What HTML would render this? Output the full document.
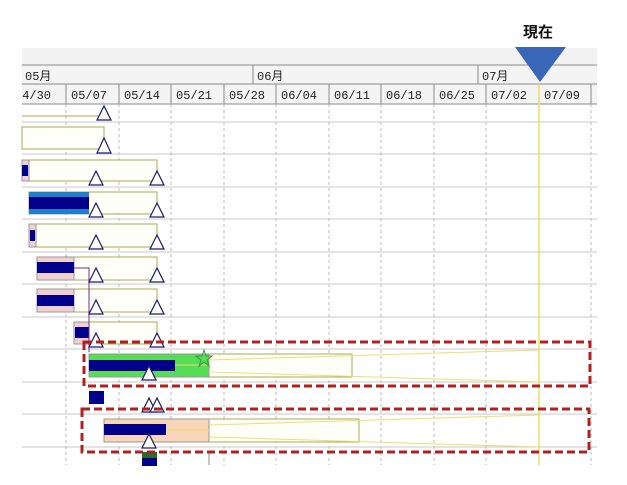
<!DOCTYPE html>
<html><head><meta charset="utf-8"><style>
html,body{margin:0;padding:0;background:#fff;width:627px;height:485px;overflow:hidden}
svg{display:block}
text{font-family:"Liberation Sans","Noto Sans CJK JP",sans-serif}
text.m{font-family:"Liberation Mono","Noto Sans CJK JP",monospace}
</style></head><body>
<svg width="627" height="485" viewBox="0 0 627 485" xmlns="http://www.w3.org/2000/svg">
<rect x="22" y="48" width="575" height="17" fill="#f2f2f2"/>
<rect x="22" y="65" width="575" height="39" fill="#f4f4f4"/>
<line x1="22" y1="65" x2="597" y2="65" stroke="#8a8a8a"/>
<line x1="22" y1="84" x2="597" y2="84" stroke="#8a8a8a"/>
<line x1="22" y1="104" x2="597" y2="104" stroke="#8a8a8a"/>
<line x1="253" y1="65" x2="253" y2="84" stroke="#8a8a8a"/>
<line x1="478" y1="65" x2="478" y2="84" stroke="#8a8a8a"/>
<g font-size="12" fill="#222">
<text class="m" x="25" y="80">05月</text><text class="m" x="257" y="80">06月</text><text class="m" x="482" y="80">07月</text>
</g>
<g stroke="#8a8a8a">
<line x1="66" y1="84" x2="66" y2="104"/><line x1="119" y1="84" x2="119" y2="104"/><line x1="171" y1="84" x2="171" y2="104"/><line x1="224" y1="84" x2="224" y2="104"/><line x1="276" y1="84" x2="276" y2="104"/><line x1="329" y1="84" x2="329" y2="104"/><line x1="381" y1="84" x2="381" y2="104"/><line x1="434" y1="84" x2="434" y2="104"/><line x1="486" y1="84" x2="486" y2="104"/><line x1="539" y1="84" x2="539" y2="104"/><line x1="591" y1="84" x2="591" y2="104"/>
</g>
<g font-size="12" fill="#222">
<text class="m" x="15" y="99">04/30</text><text class="m" x="71" y="99">05/07</text><text class="m" x="124" y="99">05/14</text><text class="m" x="176" y="99">05/21</text><text class="m" x="229" y="99">05/28</text><text class="m" x="281" y="99">06/04</text><text class="m" x="334" y="99">06/11</text><text class="m" x="386" y="99">06/18</text><text class="m" x="439" y="99">06/25</text><text class="m" x="491" y="99">07/02</text><text class="m" x="544" y="99">07/09</text>
</g>
<rect x="0" y="84" width="22" height="20" fill="#fff"/>
<g stroke="#bbb" stroke-dasharray="3,3">
<line x1="66" y1="104" x2="66" y2="465"/><line x1="119" y1="104" x2="119" y2="465"/><line x1="171" y1="104" x2="171" y2="465"/><line x1="224" y1="104" x2="224" y2="465"/><line x1="276" y1="104" x2="276" y2="465"/><line x1="329" y1="104" x2="329" y2="465"/><line x1="381" y1="104" x2="381" y2="465"/><line x1="434" y1="104" x2="434" y2="465"/><line x1="486" y1="104" x2="486" y2="465"/><line x1="591" y1="104" x2="591" y2="465"/>
</g>
<g stroke="#c8c8c8">
<line x1="22" y1="122" x2="597" y2="122"/><line x1="22" y1="154" x2="597" y2="154"/><line x1="22" y1="187" x2="597" y2="187"/><line x1="22" y1="219" x2="597" y2="219"/><line x1="22" y1="252" x2="597" y2="252"/><line x1="22" y1="284" x2="597" y2="284"/><line x1="22" y1="317" x2="597" y2="317"/><line x1="22" y1="349" x2="597" y2="349"/><line x1="22" y1="382" x2="597" y2="382"/><line x1="22" y1="414" x2="597" y2="414"/><line x1="22" y1="447" x2="597" y2="447"/>
</g>
<line x1="539" y1="84" x2="539" y2="465" stroke="#e8e060" stroke-width="1.5"/>
<g fill="#fffffa" stroke="#a8a850">
<path d="M22 116 H104 V108" fill="none"/>
<rect x="22" y="127" width="82" height="22"/>
<rect x="22" y="160" width="135" height="21"/>
<rect x="29" y="192" width="128" height="22"/>
<rect x="29" y="224" width="128" height="23"/>
<rect x="37" y="257" width="120" height="23"/>
<rect x="37" y="289" width="120" height="23"/>
<rect x="74" y="322" width="83" height="22"/>
<rect x="209" y="354" width="143" height="23"/>
<rect x="209" y="419" width="150" height="23"/>
</g>
<rect x="22" y="160" width="7" height="21" fill="#f0d0d0" stroke="#999"/><rect x="22" y="165" width="6" height="11" fill="#00008b"/>
<rect x="29" y="192" width="60" height="22" fill="#1f7fcc"/><rect x="29" y="197" width="60" height="12" fill="#00008b"/>
<rect x="29" y="224" width="7" height="23" fill="#f0d0d0" stroke="#999"/><rect x="30" y="230" width="5" height="11" fill="#00008b"/>
<rect x="37" y="257" width="37" height="23" fill="#f0d0d0" stroke="#999"/><rect x="37" y="262" width="37" height="11" fill="#00008b"/>
<rect x="37" y="289" width="37" height="23" fill="#f0d0d0" stroke="#999"/><rect x="37" y="295" width="37" height="11" fill="#00008b"/>
<rect x="74" y="322" width="15" height="22" fill="#f0d0d0" stroke="#999"/><rect x="75" y="327" width="14" height="11" fill="#00008b"/>
<path d="M74 268 H89 V352" stroke="#7a2a8a" fill="none"/>
<rect x="89" y="354" width="120" height="23" fill="#55dd55" stroke="#999"/><rect x="89" y="360" width="86" height="11" fill="#00008b"/>
<rect x="89" y="391" width="15" height="13" fill="#00008b"/>
<rect x="104" y="419" width="105" height="23" fill="#f8d4b8" stroke="#999"/><rect x="104" y="424" width="62" height="11" fill="#00008b"/>
<rect x="142" y="452" width="15" height="6" fill="#2a6a2a"/><rect x="142" y="458" width="15" height="8" fill="#00008b"/>
<line x1="209" y1="452" x2="209" y2="465" stroke="#888"/>
<g stroke="#e8e070" fill="none">
<path d="M209 360 L539 350 M209 372 L539 382 M175 365 H209"/>
<path d="M209 425 L539 415 M209 437 L539 447 M166 430 H209"/>
</g>
<polygon points="204,350 206,356 212,356 207,360 209,366 204,362 199,366 201,360 196,356 202,356" fill="none" stroke="#3a9a3a"/>
<g fill="#fff" stroke="#1a1a6a" stroke-width="1.2">
<polygon points="104,106 97,120 111,120"/>
<polygon points="104,138 97,153 111,153"/>
<polygon points="96,171 89,185 103,185"/><polygon points="157,171 150,185 164,185"/>
<polygon points="96,203 89,217 103,217"/><polygon points="157,203 150,217 164,217"/>
<polygon points="96,235 89,249 103,249"/><polygon points="157,235 150,249 164,249"/>
<polygon points="96,268 89,282 103,282"/><polygon points="157,268 150,282 164,282"/>
<polygon points="96,300 89,314 103,314"/><polygon points="157,300 150,314 164,314"/>
<polygon points="96,333 89,347 103,347"/><polygon points="157,333 150,347 164,347"/>
<polygon points="149,366 142,380 156,380"/>
<polygon points="149,398 142,412 156,412"/><polygon points="157,398 150,412 164,412"/>
<polygon points="149,434 142,448 156,448"/>
</g>
<g fill="none" stroke="#b02020" stroke-width="3" stroke-dasharray="8,4">
<rect x="84" y="342" width="506" height="44"/>
<rect x="82" y="409" width="507" height="43"/>
</g>
<polygon points="515,47 566,47 540,82" fill="#3a66b8"/>
<text x="538" y="37" font-size="15" font-weight="bold" text-anchor="middle" fill="#111">現在</text>
</svg>
</body></html>
